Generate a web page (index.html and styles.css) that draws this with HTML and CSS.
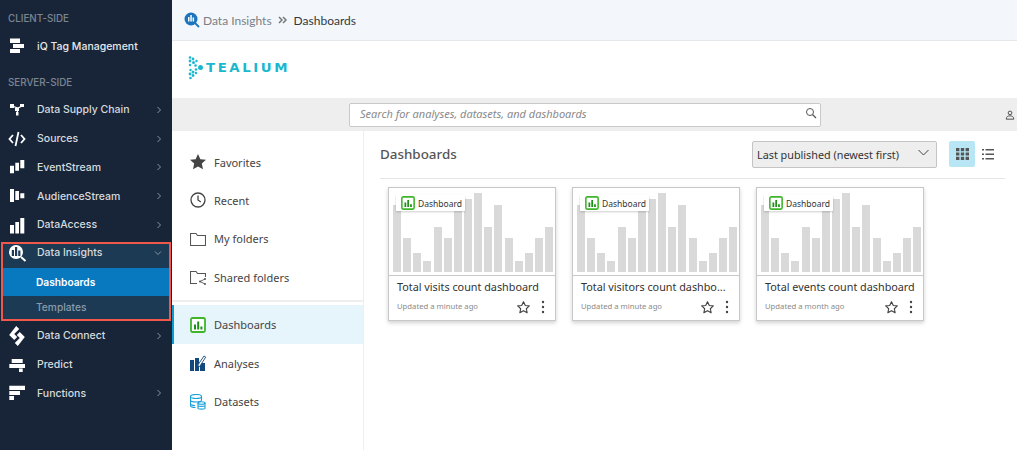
FILE: index.html
```html
<!DOCTYPE html>
<html lang="en">
<head>
  <meta charset="UTF-8">
  <title>Dashboards</title>
  <link rel="stylesheet" href="styles.css">
</head>
<body>

  <svg class="defs" width="0" height="0">
    <symbol id="chev" viewBox="0 0 6 8"><path d="M1.500 1l3 3-3 3" fill="none" stroke="currentColor" stroke-width="1"/></symbol>
    <symbol id="dash" viewBox="0 0 16 16">
      <rect x="1" y="1" width="14" height="14" rx="1.500" fill="#fff" stroke="#3fb52c" stroke-width="1.800"/>
      <path d="M4 7.500h2v5H4zM7.200 4.500h2v8h-2zM10.400 9.500h2v3h-2z" fill="#1f8f1a"/>
    </symbol>
    <symbol id="star" viewBox="0 0 16 16"><path d="M8 1.800l1.900 4 4.300.5-3.200 3 .9 4.300L8 11.400l-3.900 2.200.9-4.300-3.200-3 4.300-.5z" fill="none" stroke="#444" stroke-width="1.200" stroke-linejoin="round"/></symbol>
    <symbol id="dots" viewBox="0 0 4 14"><circle cx="2" cy="2" r="1.200" fill="#444"/><circle cx="2" cy="7" r="1.200" fill="#444"/><circle cx="2" cy="12" r="1.200" fill="#444"/></symbol>
  </svg>

  <aside class="sidebar">
    <div class="side-head">CLIENT-SIDE</div>
    <a class="side-item side-tall">
      <svg class="side-icon" viewBox="0 0 18 16"><path d="M2 .5h10V5H2zM5 6h11v4H5zM2 11h10v4H2z" fill="#fff"/></svg>
      <span>iQ Tag Management</span>
    </a>
    <div class="side-head side-head-gap">SERVER-SIDE</div>
    <div class="side-list">
      <a class="side-item">
        <svg class="side-icon" viewBox="0 0 18 16"><path d="M4 4l6 2 4-2M10 6l-1 6" fill="none" stroke="#fff" stroke-width="1.300"/><path d="M2 2h4v4H2zM12 2h4v3h-4zM7 6h4v3H7zM8 10h2.500v3.500H8z" fill="#fff"/></svg>
        <span>Data Supply Chain</span>
        <svg class="side-chev"><use href="#chev"/></svg>
      </a>
      <a class="side-item">
        <svg class="side-icon" viewBox="0 0 18 16"><path d="M5 4L1.500 8 5 12M13 4l3.500 4L13 12M10.500 1l-3 14" fill="none" stroke="#fff" stroke-width="1.800"/></svg>
        <span>Sources</span>
        <svg class="side-chev"><use href="#chev"/></svg>
      </a>
      <a class="side-item">
        <svg class="side-icon" viewBox="0 0 18 16"><path d="M2 6.700h4v7.600H2zM7.300 3.700H11v8H7.300zM12.300 1h4v8.300h-4z" fill="#fff"/></svg>
        <span>EventStream</span>
        <svg class="side-chev"><use href="#chev"/></svg>
      </a>
      <a class="side-item">
        <svg class="side-icon" viewBox="0 0 18 16"><path d="M2 1h4v13H2zM7.300 3H11v9H7.300zM12.300 5.300h4v5h-4z" fill="#fff"/></svg>
        <span>AudienceStream</span>
        <svg class="side-chev"><use href="#chev"/></svg>
      </a>
      <a class="side-item">
        <svg class="side-icon" viewBox="0 0 18 16"><path d="M2 8h4v8.500H2zM7.300 5H11v11.500H7.300zM12.300 1h4v15.500h-4z" fill="#fff"/></svg>
        <span>DataAccess</span>
        <svg class="side-chev"><use href="#chev"/></svg>
      </a>
    </div>

    <div class="side-group">
      <a class="side-item side-open">
        <svg class="side-icon side-icon-big" viewBox="0 0 20 18"><circle cx="8" cy="8" r="7" fill="#fff"/><path d="M3.800 6h2.200v6H3.800zM7 3h2.200v9H7zM10.200 6.500h2.200V12h-2.200z" fill="#1d3a55"/><path d="M13 13l4.500 4" stroke="#fff" stroke-width="2"/></svg>
        <span>Data Insights</span>
        <svg class="side-chev side-chev-down"><use href="#chev"/></svg>
      </a>
      <a class="side-sub side-sub-on">Dashboards</a>
      <a class="side-sub side-sub-last">Templates</a>
    </div>

    <div class="side-list">
      <a class="side-item">
        <svg class="side-icon" viewBox="0 0 18 16"><path d="M8.200-2l3 3-5 5 3 3-3 3-5-5zM9.800 18l-3-3 5-5-3-3 3-3 5 5z" fill="#fff"/></svg>
        <span>Data Connect</span>
        <svg class="side-chev"><use href="#chev"/></svg>
      </a>
      <a class="side-item">
        <svg class="side-icon" viewBox="0 0 18 16"><path d="M3.700 2h11v4h-11zM1.300 7H17v4H1.300zM11 11.500h3.700V15H11z" fill="#fff"/></svg>
        <span>Predict</span>
      </a>
      <a class="side-item">
        <svg class="side-icon" viewBox="0 0 18 16"><path d="M1.300.7H17V5H1.300zM1.300 6H12v4H1.300zM1.300 11H6v4H1.300z" fill="#fff"/></svg>
        <span>Functions</span>
        <svg class="side-chev"><use href="#chev"/></svg>
      </a>
    </div>
  </aside>

  <div class="page">
    <header class="crumbs">
      <svg class="crumb-icon" viewBox="0 0 16 16"><circle cx="7" cy="7" r="6.500" fill="#1c75bc"/><path d="M4 5h1.500v4.500H4zM6.300 3h1.500v6.500H6.300zM8.600 5.500h1.500v4H8.600z" fill="#fff"/><path d="M11 11l4 4" stroke="#1c75bc" stroke-width="1.800"/></svg>
      <span class="crumb-link">Data Insights</span>
      <svg class="crumb-sep" viewBox="0 0 10 8"><path d="M1 1l3 3-3 3M5 1l3 3-3 3" fill="none" stroke="#777" stroke-width="1.500"/></svg>
      <span class="crumb-now">Dashboards</span>
    </header>

    <div class="brand">
      <svg class="brand-mark" viewBox="0 0 16 24">
        <g fill="#1ab7cf">
          <circle cx="2" cy="1.500" r="1.300"/><circle cx="5" cy="3" r="1.400"/><circle cx="2" cy="5" r="1.400"/><circle cx="5.500" cy="6.500" r="1.500"/><circle cx="8.500" cy="5" r="1.200"/>
          <circle cx="2" cy="9" r="1.200"/><circle cx="7.500" cy="9.500" r="1.300"/><circle cx="12.500" cy="11.500" r="2.500"/><circle cx="8" cy="13.500" r="1.300"/>
          <circle cx="2.500" cy="14" r="1.200"/><circle cx="5" cy="16" r="1.500"/><circle cx="2" cy="18" r="1.400"/><circle cx="8" cy="17" r="1.200"/><circle cx="5" cy="19.500" r="1.400"/><circle cx="2.500" cy="22" r="1.300"/>
        </g>
      </svg>
      <span class="brand-name">TEALIUM</span>
    </div>

    <div class="searchbar">
      <div class="search">
        <span class="search-text">Search for analyses, datasets, and dashboards</span>
        <svg class="search-icon" viewBox="0 0 12 12"><circle cx="5" cy="5" r="3.500" fill="none" stroke="#555" stroke-width="1"/><path d="M7.500 7.500l3.500 3.500" stroke="#555" stroke-width="1.300"/></svg>
      </div>
      <svg class="user-icon" viewBox="0 0 12 12"><circle cx="6" cy="3.500" r="2.200" fill="none" stroke="#444" stroke-width="1.100"/><path d="M1.500 11c0-3 2-4 4.500-4s4.500 1 4.500 4z" fill="none" stroke="#444" stroke-width="1.100"/></svg>
    </div>

    <div class="body">
      <nav class="lnav">
        <div class="lnav-top">
          <a class="lnav-item">
            <svg class="lnav-icon" viewBox="0 0 16 16"><path d="M8 0l2.400 5.200 5.600.6-4.200 3.800 1.200 5.600L8 12.400l-5 2.800 1.200-5.600L0 5.800l5.600-.6z" fill="#444"/></svg>
            Favorites
          </a>
          <a class="lnav-item">
            <svg class="lnav-icon" viewBox="0 0 16 16"><circle cx="8" cy="8" r="7" fill="none" stroke="#444" stroke-width="1.300"/><path d="M8 3.500V8l2.800 2" fill="none" stroke="#444" stroke-width="1.300"/></svg>
            Recent
          </a>
          <a class="lnav-item">
            <svg class="lnav-icon" viewBox="0 0 16 16"><path d="M.5 2.500h5.500l1.500 2h8v10H.5z" fill="none" stroke="#555" stroke-width="1.100"/></svg>
            My folders
          </a>
          <a class="lnav-item">
            <svg class="lnav-icon" viewBox="0 0 16 16"><path d="M7 14.500H.5v-12H6l1.500 2h8V8" fill="none" stroke="#555" stroke-width="1.100"/><path d="M15 10l-5 2.500 5 2.500" fill="none" stroke="#555" stroke-width=".9"/><circle cx="15" cy="10" r="1" fill="#555"/><circle cx="10" cy="12.500" r="1" fill="#555"/><circle cx="15" cy="15" r="1" fill="#555"/></svg>
            Shared folders
          </a>
        </div>
        <div class="lnav-bottom">
          <a class="lnav-item lnav-on">
            <svg class="lnav-icon"><use href="#dash"/></svg>
            Dashboards
          </a>
          <a class="lnav-item">
            <svg class="lnav-icon" viewBox="0 0 16 16"><path d="M0 5h4v11H0zM5 3h4v13H5zM10 8h5v8h-5z" fill="#12497c"/><path d="M7.500 10.500L14 1l1.700 1.100-6 9.400z" fill="#fff" stroke="#12497c" stroke-width=".9"/></svg>
            Analyses
          </a>
          <a class="lnav-item">
            <svg class="lnav-icon" viewBox="0 0 16 16"><g fill="none" stroke="#1aa0d8" stroke-width="1.100"><ellipse cx="6" cy="2.500" rx="5.500" ry="2"/><path d="M.5 2.500v9c0 1 1.500 2 5 2M.5 6c0 1 2 2 5.500 2s5.500-1 5.500-2V2.500M.5 9.500c0 1 2 2 4.500 2"/><ellipse cx="11.500" cy="9" rx="3.500" ry="1.300"/><path d="M8 9v5.500c0 .8 7 .8 7 0V9M8 11.800c0 .8 7 .8 7 0"/></g></svg>
            Datasets
          </a>
        </div>
      </nav>

      <main class="main">
        <div class="main-head">
          <h1>Dashboards</h1>
          <div class="sort">
            <span>Last published (newest first)</span>
            <svg class="sort-chev" viewBox="0 0 12 7"><path d="M1 1l5 5 5-5" fill="none" stroke="#444" stroke-width="1"/></svg>
          </div>
          <div class="view view-on">
            <svg width="13" height="12" viewBox="0 0 13 12"><path d="M0 0h3.400v3.200H0zM4.800 0h3.400v3.200H4.800zM9.600 0H13v3.200H9.600zM0 4.400h3.400v3.200H0zM4.800 4.400h3.400v3.200H4.800zM9.600 4.400H13v3.200H9.600zM0 8.800h3.400V12H0zM4.800 8.800h3.400V12H4.800zM9.600 8.800H13V12H9.600z" fill="#555"/></svg>
          </div>
          <div class="view view-last">
            <svg width="12" height="11" viewBox="0 0 12 11"><path d="M0 0h2v1.500H0zM3.500 0H12v1.500H3.500zM0 4.500h2V6H0zM3.500 4.500H12V6H3.500zM0 9h2v1.500H0zM3.500 9H12v1.500H3.500z" fill="#555"/></svg>
          </div>
        </div>

        <div class="cards">
          <article class="card">
            <div class="chart">
              <div class="badge"><svg class="badge-icon"><use href="#dash"/></svg>Dashboard</div>
              <i style="height:67px"></i><i style="height:34px"></i><i style="height:19px"></i><i style="height:11px"></i><i style="height:45px"></i><i style="height:34px"></i><i style="height:67px"></i><i style="height:73px"></i><i style="height:79px"></i><i style="height:45px"></i><i style="height:67px"></i><i style="height:34px"></i><i style="height:11px"></i><i style="height:19px"></i><i style="height:34px"></i><i style="height:45px"></i>
            </div>
            <div class="card-body">
              <div class="card-title">Total visits count dashboard</div>
              <div class="card-foot">
                <span class="card-time">Updated a minute ago</span>
                <svg class="card-star"><use href="#star"/></svg>
                <svg class="card-dots"><use href="#dots"/></svg>
              </div>
            </div>
          </article>
          <article class="card">
            <div class="chart">
              <div class="badge"><svg class="badge-icon"><use href="#dash"/></svg>Dashboard</div>
              <i style="height:67px"></i><i style="height:34px"></i><i style="height:19px"></i><i style="height:11px"></i><i style="height:45px"></i><i style="height:34px"></i><i style="height:67px"></i><i style="height:73px"></i><i style="height:79px"></i><i style="height:45px"></i><i style="height:67px"></i><i style="height:34px"></i><i style="height:11px"></i><i style="height:19px"></i><i style="height:34px"></i><i style="height:45px"></i>
            </div>
            <div class="card-body">
              <div class="card-title">Total visitors count dashbo...</div>
              <div class="card-foot">
                <span class="card-time">Updated a minute ago</span>
                <svg class="card-star"><use href="#star"/></svg>
                <svg class="card-dots"><use href="#dots"/></svg>
              </div>
            </div>
          </article>
          <article class="card">
            <div class="chart">
              <div class="badge"><svg class="badge-icon"><use href="#dash"/></svg>Dashboard</div>
              <i style="height:67px"></i><i style="height:34px"></i><i style="height:19px"></i><i style="height:11px"></i><i style="height:45px"></i><i style="height:34px"></i><i style="height:67px"></i><i style="height:73px"></i><i style="height:79px"></i><i style="height:45px"></i><i style="height:67px"></i><i style="height:34px"></i><i style="height:11px"></i><i style="height:19px"></i><i style="height:34px"></i><i style="height:45px"></i>
            </div>
            <div class="card-body">
              <div class="card-title">Total events count dashboard</div>
              <div class="card-foot">
                <span class="card-time">Updated a month ago</span>
                <svg class="card-star"><use href="#star"/></svg>
                <svg class="card-dots"><use href="#dots"/></svg>
              </div>
            </div>
          </article>
        </div>
      </main>
    </div>
  </div>

</body>
</html>
```

FILE: styles.css
```css
* {
  box-sizing: border-box;
}

html, body {
  height: 450px;
  overflow: hidden;
}

body {
  margin: 0;
  display: flex;
  background-color: #fff;
  font-family: 'Noto Sans', sans-serif;
}

.defs {
  position: absolute;
}

/* left dark menu */
.sidebar {
  width: 172px;
  flex: none;
  background-color: #182538;
  padding-top: 8px;
  font-family: 'Inter', sans-serif;
}

.side-head {
  height: 20px;
  line-height: 22px;
  padding-left: 8px;
  font-size: 9.800px;
  font-weight: 500;
  color: #7b8592;
}

.side-head-gap {
  margin-top: 8px;
}

.side-list {
  margin-top: 3.400px;
}

.side-group + .side-list {
  margin-top: 0.400px;
}

.side-item {
  display: flex;
  align-items: center;
  height: 28.800px;
  padding-left: 8px;
  padding-right: 10px;
  font-size: 10.500px;
  font-weight: 500;
  color: #d6dade;
}

.side-tall {
  height: 36px;
  color: #e6e8eb;
}

.side-icon {
  width: 18px;
  height: 16px;
  margin-right: 11px;
  flex: none;
  overflow: visible;
}

.side-icon-big {
  width: 20px;
  height: 18px;
  margin-left: -1px;
  margin-right: 9px;
}

.side-chev {
  width: 6px;
  height: 8px;
  margin-left: auto;
  color: #8b94a0;
}

.side-chev-down {
  transform: rotate(90deg);
}

.side-group {
  margin: 2.600px 1px 0;
  border: 2px solid #f0584c;
  background-color: #1c3a54;
}

.side-open {
  height: 24px;
  padding-left: 6px;
  padding-right: 8px;
  padding-bottom: 6px;
}

.side-sub {
  display: block;
  padding-left: 33px;
  height: 28px;
  line-height: 28px;
  font-size: 10.200px;
  font-weight: 500;
  color: #8c9bab;
}

.side-sub-on {
  background-color: #0878bf;
  color: #fff;
  font-weight: 600;
}

.side-sub-last {
  height: 23px;
  line-height: 23px;
}

/* right part */
.page {
  flex: 1;
  min-width: 0;
  display: flex;
  flex-direction: column;
}

.crumbs {
  height: 41px;
  flex: none;
  display: flex;
  align-items: center;
  padding-left: 12px;
  background-color: #f3f7fc;
  border-bottom: 1px solid #e6e9ec;
  font-family: 'Lato', sans-serif;
  font-size: 12px;
}

.crumb-icon {
  width: 16px;
  height: 16px;
  margin-right: 3px;
}

.crumb-link {
  color: #7a7f85;
}

.crumb-sep {
  width: 10px;
  height: 8px;
  margin: 0 6px;
}

.crumb-now {
  color: #33383d;
}

.brand {
  height: 57px;
  flex: none;
  display: flex;
  align-items: center;
  padding-left: 16px;
  padding-bottom: 4px;
}

.brand-mark {
  width: 16px;
  height: 24px;
  margin-right: 2px;
}

.brand-name {
  font-family: 'DejaVu Sans', sans-serif;
  font-size: 11.500px;
  font-weight: 700;
  letter-spacing: 2.200px;
  color: #1ab7cf;
  transform: scaleX(1.16);
  transform-origin: left center;
}

.searchbar {
  height: 33px;
  flex: none;
  display: flex;
  align-items: center;
  padding-left: 177px;
  background-color: #eeeeee;
}

.search {
  width: 472px;
  height: 24px;
  display: flex;
  align-items: center;
  justify-content: space-between;
  padding: 0 3px 0 10px;
  background-color: #fff;
  border: 1px solid #c9c9c9;
  border-radius: 2px;
  font-size: 11px;
  font-style: italic;
  color: #8a8a8a;
}

.search-text {
  margin-top: -2px;
}

.search-icon {
  width: 12px;
  height: 12px;
  margin-top: -3px;
}

.user-icon {
  width: 10px;
  height: 10px;
  margin-left: 184px;
}

.body {
  flex: 1;
  display: flex;
  min-height: 0;
}

.lnav {
  width: 192px;
  flex: none;
  border-right: 1px solid #eeeeee;
}

.lnav-top {
  padding-top: 12px;
  padding-bottom: 4px;
  border-bottom: 2px solid #eeeeee;
}

.lnav-bottom {
  padding-top: 3px;
}

.lnav-item {
  display: flex;
  align-items: center;
  height: 38.330px;
  padding-left: 18px;
  font-size: 11px;
  color: #444;
}

.lnav-icon {
  width: 16px;
  height: 16px;
  margin-right: 8px;
  flex: none;
}

.lnav-on {
  height: 39px;
  padding-left: 16px;
  background-color: #e6f4fb;
  border-left: 2px solid #0a9ad6;
}

.main {
  flex: 1;
  min-width: 0;
  padding: 0 12px 0 16px;
}

.main-head {
  display: flex;
  align-items: flex-start;
  height: 48px;
  padding-top: 10px;
  border-bottom: 1px solid #e5e5e5;
}

.main-head h1 {
  margin: 0 auto 0 0;
  line-height: 26px;
  font-size: 13.400px;
  font-weight: 500;
  color: #555;
}

.sort {
  width: 185px;
  height: 27px;
  display: flex;
  align-items: center;
  justify-content: space-between;
  padding: 0 6px 0 4px;
  margin-right: 12px;
  background-color: #eeeeee;
  border: 1px solid #c4c4c4;
  border-radius: 2px;
  font-size: 10.800px;
  color: #333;
}

.sort-chev {
  width: 13px;
  height: 7px;
  margin-top: -4px;
}

.view {
  width: 26px;
  height: 26px;
  display: flex;
  align-items: center;
  justify-content: center;
  border-radius: 2px;
}

.view-last {
  margin-right: 4px;
}

.view-on {
  background-color: #b9e6f5;
}

.cards {
  display: flex;
  gap: 16px;
  margin-top: 8px;
  padding-left: 8px;
}

.card {
  width: 168px;
  height: 134px;
  background-color: #fff;
  border: 1px solid #c8c8c8;
  box-shadow: 0 2px 4px rgba(0, 0, 0, 0.18);
}

.chart {
  position: relative;
  height: 88px;
  display: flex;
  align-items: flex-end;
  gap: 2.170px;
  padding: 0 2px 3px 4px;
  border-bottom: 1px solid #c8c8c8;
}

.chart i {
  flex: 1;
  background-color: #d9d9d9;
}

.badge {
  position: absolute;
  left: 7px;
  top: 7px;
  width: 69px;
  height: 16px;
  display: flex;
  align-items: center;
  padding-left: 5px;
  background-color: #fff;
  box-shadow: 0 1px 2px rgba(0, 0, 0, 0.2);
  font-size: 8.500px;
  color: #333;
}

.badge-icon {
  width: 14px;
  height: 14px;
  margin-right: 3px;
}

.card-body {
  padding: 2px 8px 0;
}

.card-title {
  font-size: 10.800px;
  line-height: 17px;
  color: #333;
  white-space: nowrap;
}

.card-foot {
  display: flex;
  align-items: center;
  margin-top: 3px;
  height: 18px;
}

.card-time {
  font-size: 7.700px;
  color: #8a8a8a;
  margin-right: auto;
  margin-top: -2px;
}

.card-star {
  width: 15px;
  height: 15px;
}

.card-dots {
  width: 4px;
  height: 14px;
  margin-left: 10px;
  margin-right: 2px;
}
```
